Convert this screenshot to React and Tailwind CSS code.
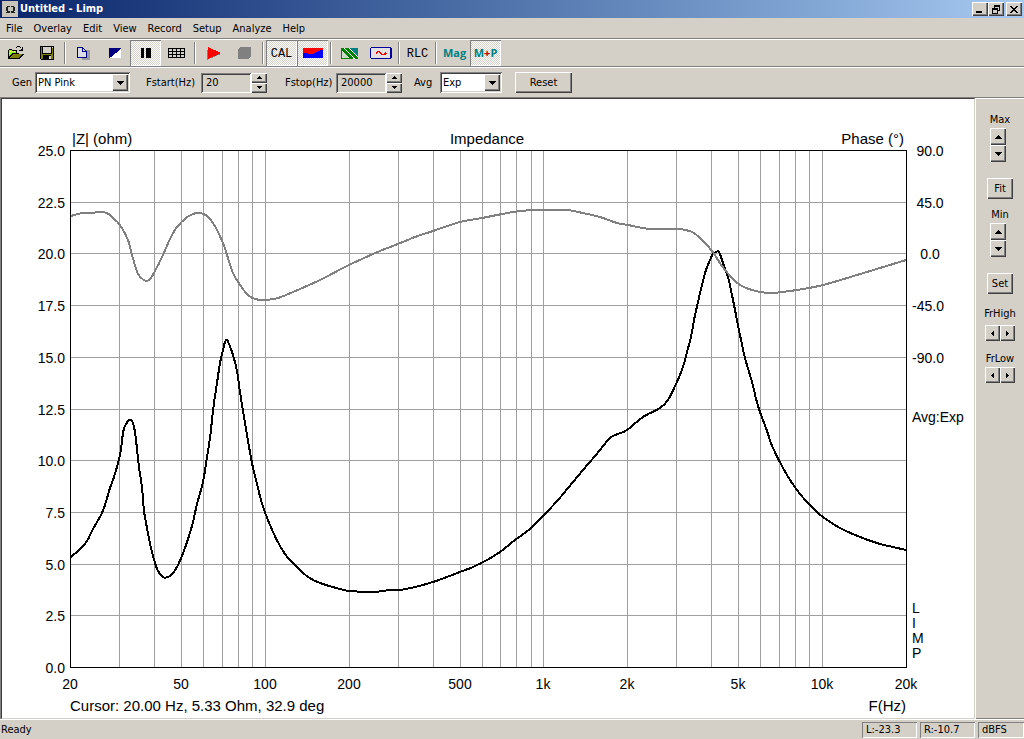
import React from 'react';
import clsx from 'clsx';

const raised = 'bg-[#d4d0c8] shadow-[inset_1px_1px_#fff,inset_-1px_-1px_#404040,inset_-2px_-2px_#808080]';
const sunken = 'shadow-[inset_1px_1px_#808080,inset_-1px_-1px_#fff,inset_2px_2px_#404040,inset_-2px_-2px_#d4d0c8]';

const menus = ['File', 'Overlay', 'Edit', 'View', 'Record', 'Setup', 'Analyze', 'Help'];

// Plot frame and scales
const LEFT = 70;
const RIGHT = 906;
const TOP = 150;
const BOTTOM = 667;
const freqToX = (f) => Math.round(LEFT + (Math.log10(f / 20) / 3) * (RIGHT - LEFT));
const rowToY = (i) => Math.round(TOP + (i * (BOTTOM - TOP)) / 10);

const gridFreqs = [
  30, 40, 50, 60, 70, 80, 90, 100, 200, 300, 400, 500, 600, 700, 800, 900, 1000,
  2000, 3000, 4000, 5000, 6000, 7000, 8000, 9000, 10000
];
const freqLabels = [
  [20, '20'], [50, '50'], [100, '100'], [200, '200'], [500, '500'],
  [1000, '1k'], [2000, '2k'], [5000, '5k'], [10000, '10k'], [20000, '20k']
];
const ohmLabels = ['25.0', '22.5', '20.0', '17.5', '15.0', '12.5', '10.0', '7.5', '5.0', '2.5', '0.0'];
const phaseLabels = ['90.0', '45.0', '0.0', '-45.0', '-90.0'];

const impedance =
  '71,557 80,549 87,541 93,529 101,515 105,505 110,488 114,477 120,455 123,433 125,426 129,420 131,420 133,423 135,432 137,449 139,467 142,488 144,511 147,528 151,548 155,563 158,571 163,577 168,577 174,572 182,556 189,536 193,522 197,504 203,482 207,457 210,438 212,420 214,403 217,383 220,363 223,350 225,342 227,340 229,344 233,355 237,371 240,392 244,417 247,435 252,463 257,484 261,500 266,515 273,532 280,546 288,558 297,567 308,577 320,583 340,589 350,591 373,592 390,590 400,590 415,587 433,582 447,577 460,572 473,567 487,560 500,552 515,540 530,529 543,516 558,500 573,482 583,470 595,456 610,438 618,434 627,430 643,417 660,408 668,400 676,384 683,367 687,352 691,337 694,320 698,302 702,285 706,270 710,260 713,254 716,252 719,252 723,263 728,277 732,295 736,315 740,335 745,358 752,382 758,406 767,431 773,448 787,475 797,490 806,501 815,510 823,517 840,528 860,537 880,544 893,547 906,550';
const phase =
  '71,216 82,213 90,213 100,212 107,213 113,218 120,225 128,240 132,255 138,274 144,280 149,280 155,271 163,255 170,239 177,227 186,218 193,214 198,213 204,214 210,219 216,228 223,243 227,255 233,273 240,285 248,295 255,299 265,300 278,298 293,292 320,280 349,265 380,251 398,244 415,237 433,231 460,222 482,218 513,212 533,210 548,210 567,210 578,212 600,217 617,223 628,225 650,229 678,229 692,232 702,240 712,251 722,266 732,278 740,285 752,290 770,293 797,290 823,285 857,275 880,268 906,260';

// Catmull-Rom spline through the sampled points
const smooth = (str) => {
  const p = str.split(' ').map((s) => s.split(',').map(Number));
  let d = `M${p[0]}`;
  for (let i = 0; i < p.length - 1; i++) {
    const a = p[i - 1] || p[i];
    const b = p[i];
    const c = p[i + 1];
    const e = p[i + 2] || c;
    d += `C${b[0] + (c[0] - a[0]) / 6},${b[1] + (c[1] - a[1]) / 6} ${c[0] - (e[0] - b[0]) / 6},${c[1] - (e[1] - b[1]) / 6} ${c}`;
  }
  return d;
};

const arrows = {
  up: { w: 7, h: 4, d: 'M3 0h1v1h1v1h1v1h1v1H0V3h1V2h1V1h1z' },
  down: { w: 7, h: 4, d: 'M0 0h7v1H6v1H5v1H4v1H3V3H2V2H1V1H0z' },
  upSmall: { w: 5, h: 3, d: 'M2 0h1v1h1v1h1v1H0V2h1V1h1z' },
  downSmall: { w: 5, h: 3, d: 'M0 0h5v1H4v1H3v1H2V2H1V1H0z' },
  left: { w: 3, h: 5, d: 'M0 3V2h1V1h1V0h1v5H2V4H1V3z' },
  right: { w: 3, h: 5, d: 'M0 0h1v1h1v1h1v1H2v1H1v1H0z' }
};

const Icon = ({ w, h, children }) => (
  <svg width={w} height={h} viewBox={`0 0 ${w} ${h}`} shapeRendering="crispEdges" aria-hidden="true">
    {children}
  </svg>
);

const Arrow = ({ dir }) => (
  <Icon w={arrows[dir].w} h={arrows[dir].h}>
    <path d={arrows[dir].d} fill="#000" />
  </Icon>
);

const SmallButton = ({ dir, label, className }) => (
  <button type="button" aria-label={label} className={clsx(raised, 'flex items-center justify-center', className)}>
    <Arrow dir={dir} />
  </button>
);

const Spinner = ({ label }) => (
  <div className="flex flex-col">
    <SmallButton dir="upSmall" label={`${label} up`} className="h-[10px] w-4" />
    <SmallButton dir="downSmall" label={`${label} down`} className="h-[10px] w-4" />
  </div>
);

const Dropdown = ({ id, value, options, className }) => (
  <div className={clsx('relative h-[21px] bg-white', sunken, className)}>
    <select
      id={id}
      defaultValue={value}
      className="h-full w-full appearance-none bg-transparent pl-[3px] pt-px outline-none"
    >
      {options.map((o) => (
        <option key={o}>{o}</option>
      ))}
    </select>
    <span className={clsx(raised, 'pointer-events-none absolute right-[2px] top-[2px] flex h-[17px] w-4 items-center justify-center')}>
      <Arrow dir="down" />
    </span>
  </div>
);

const ToolButton = ({ label, active, children }) => (
  <button
    type="button"
    aria-label={label}
    aria-pressed={!!active}
    className={clsx(
      'flex h-[26px] w-[31px] items-center justify-center',
      active &&
        'bg-[conic-gradient(#fff_25%,#d4d0c8_0_50%,#fff_0_75%,#d4d0c8_0)] bg-[length:2px_2px] shadow-[inset_1px_1px_#808080,inset_-1px_-1px_#fff]'
    )}
  >
    {children}
  </button>
);

const Separator = () => (
  <div className="flex w-[6px] items-center justify-center">
    <div className="h-[22px] w-[2px] border-l border-r border-l-[#808080] border-r-white" />
  </div>
);

const OpenIcon = () => (
  <Icon w={16} h={14}>
    <path d="M0 4h1V3h3v1h5v3h2v1h5v1h-1v1h-1v1h-1v1h-1v1H0z" fill="#000" />
    <path d="M1 4h3v1h4v2H4v1H3v1H2v1H1z" fill="#80ff00" />
    <path d="M2 5h1v1H2zM4 5h1v1H4zM6 5h1v1H6zM1 7h1v1H1zM3 6h1v1H3z" fill="#ffff80" />
    <path d="M5 8h9v1h-1v1h-1v1h-1v1H2v-1h1v-1h1V9h1z" fill="#808000" />
    <path d="M9 0h3v1H9zM8 1h1v1H8zM12 1h1v1h-1zM14 1h1v4h-4V4h2V3h1z" fill="#000" />
  </Icon>
);

const SaveIcon = () => (
  <Icon w={14} h={14}>
    <path d="M0 0h14v14H1v-1H0z" fill="#000" />
    <path d="M1 1h1v7h10V1h1v12H1z" fill="#808000" />
    <path d="M3 1h8v6H3z" fill="#d4d0c8" />
    <path d="M3 9h8v4H3z" fill="#000" />
    <path d="M9 10h2v3H9zM12 1h1v1h-1z" fill="#d4d0c8" />
  </Icon>
);

const CopyIcon = () => (
  <Icon w={13} h={13}>
    <path d="M5 3h8v10H5z" fill="#9c9c9c" />
    <path d="M0 0h6v1h1v1h1v1h1v1h1v7H0z" fill="#000080" />
    <path d="M1 1h4v4h4v5H1z" fill="#dcdce8" />
    <path d="M6 2h1v1h1v1H6z" fill="#dcdce8" />
  </Icon>
);

const GridIcon = () => (
  <Icon w={17} h={10}>
    <path d="M0 0h17v10H0z" fill="#000" />
    <path d="M1 1h3v2H1zM5 1h3v2H5zM9 1h3v2H9zM13 1h3v2h-3zM1 4h3v2H1zM5 4h3v2H5zM9 4h3v2H9zM13 4h3v2h-3zM1 7h3v2H1zM5 7h3v2H5zM9 7h3v2H9zM13 7h3v2h-3z" fill="#d4d0c8" />
  </Icon>
);

const Toolbar = () => (
  <div className="flex h-7 border-b border-t border-b-[#808080] border-t-white">
    <ToolButton label="Open"><OpenIcon /></ToolButton>
    <ToolButton label="Save"><SaveIcon /></ToolButton>
    <Separator />
    <ToolButton label="Copy"><CopyIcon /></ToolButton>
    <ToolButton label="Invert colors">
      <Icon w={12} h={10}>
        <path d="M0 0h12v10H0z" fill="#fff" />
        <path d="M0 0h12v1h-1v1h-1v1H9v1H8v1H6v1H5v1H4v1H3v1H1v1H0z" fill="#000080" />
      </Icon>
    </ToolButton>
    <ToolButton label="Pause" active>
      <Icon w={10} h={10}>
        <path d="M0 0h3v10H0zM5 0h5v10H5z" fill="#000" />
      </Icon>
    </ToolButton>
    <ToolButton label="Grid"><GridIcon /></ToolButton>
    <Separator />
    <ToolButton label="Record">
      <Icon w={14} h={13}>
        <path d="M0 3l14 4-14 6z" fill="#808080" />
        <path d="M1 0l13 6-13 6z" fill="#f00" />
      </Icon>
    </ToolButton>
    <ToolButton label="Stop">
      <Icon w={13} h={12}>
        <path d="M2 0h11v10h-1v1h-1v1H0V2h1V1h1z" fill="#808080" />
      </Icon>
    </ToolButton>
    <Separator />
    <ToolButton label="Calibrate" active>
      <span className="pt-px font-['Liberation_Mono',monospace] text-xs">CAL</span>
    </ToolButton>
    <ToolButton label="Calibrated response" active>
      <Icon w={20} h={10}>
        <path d="M0 0h20v10H0z" fill="#00f" />
        <path d="M0 0h20v2h-3v1h-2v1h-2v1h-2v1H5V5H0z" fill="#f00" />
      </Icon>
    </ToolButton>
    <Separator />
    <ToolButton label="Generator">
      <Icon w={17} h={11}>
        <path d="M0 0h17v11H0z" fill="#fff" />
        <path d="M8 0h9v9z" fill="#008080" />
        <path d="M0 0h2l10 10v1H0zM1 3v7h7z" fill="#008000" fillRule="evenodd" />
        <path d="M1 3l7 7H1z" fill="#c8dcc8" />
        <path d="M4 0h3l10 10v1h-3z" fill="#008000" />
      </Icon>
    </ToolButton>
    <ToolButton label="Measure">
      <Icon w={22} h={12}>
        <path d="M1 1h20v10H1z" fill="#e4e0e0" />
        <path d="M1 0h20v1h1v10h-1v1H1v-1H0V1h1zM1 1v10h19V1z" fill="#0000a0" fillRule="evenodd" />
        <path d="M6 7V5h1V4h3v1h1v1h1v1h2V6h1V5h1v1h1v1h-1v1h-5V7h-1V6H9V5H8v1H7v1z" fill="#f00000" />
      </Icon>
    </ToolButton>
    <Separator />
    <ToolButton label="RLC">
      <span className="pt-px font-['Liberation_Mono',monospace] text-xs">RLC</span>
    </ToolButton>
    <Separator />
    <ToolButton label="Magnitude">
      <span className="font-['Open_Sans',sans-serif] text-[11px] font-bold text-[#008080]">Mag</span>
    </ToolButton>
    <ToolButton label="Magnitude and phase" active>
      <span className="font-['Open_Sans',sans-serif] text-[11px] font-bold text-[#008080]">
        M<span className="text-[#c00000]">+</span>P
      </span>
    </ToolButton>
  </div>
);

const SettingsBar = () => (
  <div className="flex h-[31px] items-center border-b border-t border-b-[#808080] border-t-white pl-3">
    <label htmlFor="gen" className="w-[23px] pt-px">Gen</label>
    <Dropdown id="gen" value="PN Pink" options={['PN Pink', 'PN White', 'Sine']} className="w-[95px]" />

    <label htmlFor="fstart" className="ml-4 w-[55px] whitespace-nowrap pt-px">Fstart(Hz)</label>
    <input id="fstart" defaultValue="20" className={clsx('h-5 w-[50px] bg-transparent pl-[5px] outline-none', sunken)} />
    <Spinner label="Fstart" />

    <label htmlFor="fstop" className="ml-[18px] w-[51px] whitespace-nowrap">Fstop(Hz)</label>
    <input id="fstop" defaultValue="20000" className={clsx('h-5 w-[50px] bg-transparent pl-[5px] outline-none', sunken)} />
    <Spinner label="Fstop" />

    <label htmlFor="avg" className="ml-3 w-[26px] pt-px">Avg</label>
    <Dropdown id="avg" value="Exp" options={['None', 'Linear', 'Exp']} className="w-[62px]" />

    <button type="button" className={clsx('ml-[13px] h-[21px] w-[57px]', raised)}>Reset</button>
  </div>
);

const Chart = () => (
  <svg
    viewBox="2 99 972 619"
    className="block h-full w-full bg-white font-['Liberation_Sans',Arial,sans-serif] text-[15px]"
    role="img"
    aria-label="Impedance magnitude and phase"
  >
    <g shapeRendering="crispEdges">
      {/* Grid */}
      <g fill="#a0a0a0">
        {gridFreqs.map((f) => (
          <rect key={f} x={freqToX(f)} y={TOP} width="1" height={BOTTOM - TOP} />
        ))}
        {ohmLabels.map((label, i) => (
          <rect key={label} x={LEFT} y={rowToY(i)} width={RIGHT - LEFT} height="1" />
        ))}
      </g>
      <g fill="none" strokeWidth="2">
        <path d={smooth(impedance)} stroke="#000" />
        <path d={smooth(phase)} stroke="#808080" />
      </g>
      <path d={`M${LEFT} ${TOP}H${RIGHT + 1}V${BOTTOM + 1}H${LEFT}zM${LEFT + 1} ${TOP + 1}V${BOTTOM}H${RIGHT}V${TOP + 1}z`} fillRule="evenodd" />
    </g>

    <text x="72" y="144">|Z| (ohm)</text>
    <text x="487" y="144" textAnchor="middle">Impedance</text>
    <text x="904" y="144" textAnchor="end">Phase (°)</text>
    <text x="70" y="711">Cursor: 20.00 Hz, 5.33 Ohm, 32.9 deg</text>
    <text x="906" y="711" textAnchor="end">F(Hz)</text>

    <g className="text-[14px]">
      {ohmLabels.map((label, i) => (
        <text key={label} x="65" y={rowToY(i) + 6} textAnchor="end">{label}</text>
      ))}
      {phaseLabels.map((label, i) => (
        <text key={label} x={label.startsWith('-') ? 928 : 930} y={rowToY(i) + 6} textAnchor="middle">{label}</text>
      ))}
      {freqLabels.map(([f, label]) => (
        <text key={f} x={freqToX(f)} y="689" textAnchor="middle">{label}</text>
      ))}
      <text x="912" y="422">Avg:Exp</text>
      {['L', 'I', 'M', 'P'].map((c, i) => (
        <text key={c} x="912" y={613 + i * 15}>{c}</text>
      ))}
    </g>
  </svg>
);

const RangePanel = () => (
  <aside className="flex w-[48px] shrink-0 flex-col items-center border-b border-t border-b-[#808080] border-t-white pt-[14px] leading-[14px]">
    <span>Max</span>
    <div className="mr-1 mt-px flex flex-col">
      <SmallButton dir="up" label="Max up" className="h-[17px] w-4" />
      <SmallButton dir="down" label="Max down" className="h-[17px] w-4" />
    </div>
    <button type="button" className={clsx('mt-4 h-[21px] w-[26px]', raised)}>Fit</button>
    <span className="mt-[9px]">Min</span>
    <div className="mr-1 mt-px flex flex-col">
      <SmallButton dir="up" label="Min up" className="h-[17px] w-4" />
      <SmallButton dir="down" label="Min down" className="h-[17px] w-4" />
    </div>
    <button type="button" className={clsx('mt-4 h-[21px] w-[26px]', raised)}>Set</button>
    <span className="mt-[13px]">FrHigh</span>
    <div className="mt-1 flex">
      <SmallButton dir="left" label="FrHigh down" className="h-4 w-[15px]" />
      <SmallButton dir="right" label="FrHigh up" className="h-4 w-[15px]" />
    </div>
    <span className="mt-[11px]">FrLow</span>
    <div className="mt-px flex">
      <SmallButton dir="left" label="FrLow down" className="h-4 w-[15px]" />
      <SmallButton dir="right" label="FrLow up" className="h-4 w-[15px]" />
    </div>
  </aside>
);

const statusCell = 'flex h-4 items-center pl-1 shadow-[inset_1px_1px_#808080,inset_-1px_-1px_#fff]';

const App = () => {
  return (
    <div className="flex h-screen flex-col bg-[#d4d0c8] font-['DejaVu_Sans_Condensed','DejaVu_Sans',Tahoma,sans-serif] text-[11px] leading-[14px] text-black">
      {/* Title bar */}
      <header className="flex h-[18px] items-center bg-linear-to-r from-[#0a246a] to-[#a6caf0] px-[2px]">
        <span className="flex size-4 items-center justify-center bg-[#c8c4bc]">
          <Icon w={9} h={7}>
            <path d="M1 0h3v1H2v4h2v2H0V6h1V5H0V1h1zM5 0h3v1h1v4H8v1h1v1H5V5h2V1H5z" fill="#222" />
          </Icon>
        </span>
        <h1 className="ml-[2px] flex-1 font-bold text-white">Untitled - Limp</h1>
        <button type="button" aria-label="Minimize" className={clsx('flex h-[14px] w-4 items-center justify-center', raised)}>
          <Icon w={8} h={8}>
            <path d="M0 6h6v2H0z" />
          </Icon>
        </button>
        <button type="button" aria-label="Restore" className={clsx('flex h-[14px] w-4 items-center justify-center', raised)}>
          <Icon w={8} h={9}>
            <path d="M2 0h6v6H6V5h1V2H3v1H2zM0 3h6v6H0zM1 5v3h4V5z" fillRule="evenodd" />
          </Icon>
        </button>
        <button type="button" aria-label="Close" className={clsx('ml-[2px] flex h-[14px] w-4 items-center justify-center', raised)}>
          <Icon w={8} h={7}>
            <path d="M0 0h2v1h1v1h2V1h1V0h2v1H7v1H6v1H5v1h1v1h1v1h1v1H6V6H5V5H3v1H2v1H0V6h1V5h1V4h1V3H2V2H1V1H0z" />
          </Icon>
        </button>
      </header>

      {/* Menu */}
      <nav className="flex h-[21px] items-center gap-[11px] border-b border-b-[#808080] pl-[6px] pt-px">
        {menus.map((m) => (
          <button key={m} type="button">{m}</button>
        ))}
      </nav>

      <Toolbar />
      <SettingsBar />

      <div className="flex min-h-0 flex-1">
        <main className="min-w-0 flex-1 border-l border-l-[#808080]">
          <div className="h-full border border-b-[#d4d0c8] border-l-[#404040] border-r-[#d4d0c8] border-t-[#404040]">
            <Chart />
          </div>
        </main>
        <div className="w-px bg-white" />
        <RangePanel />
      </div>

      {/* Status bar */}
      <footer className="flex h-5 items-center gap-[3px] border-t border-t-white pl-px pt-px">
        <span className="flex-1">Ready</span>
        <span className={clsx(statusCell, 'w-[55px]')}>L:-23.3</span>
        <span className={clsx(statusCell, 'w-[55px]')}>R:-10.7</span>
        <span className={clsx(statusCell, 'w-[46px]')}>dBFS</span>
      </footer>
    </div>
  );
};

export default App;
